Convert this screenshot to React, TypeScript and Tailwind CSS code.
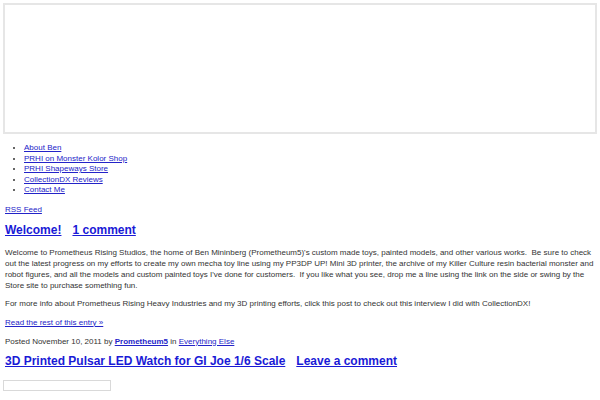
import React from 'react';

const App = () => {
  const pages = ['About Ben', 'PRHI on Monster Kolor Shop', 'PRHI Shapeways Store', 'CollectionDX Reviews', 'Contact Me'];

  return (
    <div className="min-h-screen bg-white text-[#333] text-[8px] leading-[11px]" style={{ fontFamily: '"Liberation Sans", Arial, sans-serif' }}>
      {/* header banner */}
      <div className="mx-[3px] pt-[3px]">
        <div className="h-[131px] border-2 border-[#e6e6e6]"></div>
      </div>

      <ul className="list-disc pl-[24px] mt-[9px] text-[8px] leading-[10.5px]">
        {pages.map((p) => (
          <li key={p}>
            <a href="#" className="text-[#2323c8] underline">{p}</a>
          </li>
        ))}
      </ul>

      <div className="px-[5px]">
        <p className="mt-[8px]">
          <a href="#" className="text-[#2323c8] underline">RSS Feed</a>
        </p>

        <h2 className="mt-[7px] text-[12px] leading-[16px] font-bold text-[#1a1ad6]">
          <a href="#" className="underline">Welcome!</a>
          <a href="#" className="underline ml-[11px]">1 comment</a>
        </h2>

        <p className="mt-[9px]">
          Welcome to Prometheus Rising Studios, the home of Ben Mininberg (Prometheum5)'s custom made toys, painted models, and other various works.&nbsp; Be sure to check out the latest progress on my efforts to create my own mecha toy line using my PP3DP UP! Mini 3D printer, the archive of my Killer Culture resin bacterial monster and robot figures, and all the models and custom painted toys I've done for customers.&nbsp; If you like what you see, drop me a line using the link on the side or swing by the Store site to purchase something fun.
        </p>
        <p className="mt-[7px]">
          For more info about Prometheus Rising Heavy Industries and my 3D printing efforts, click this post to check out this interview I did with CollectionDX!
        </p>
        <p className="mt-[8px]">
          <a href="#" className="text-[#2323c8] underline">Read the rest of this entry »</a>
        </p>
        <p className="mt-[8px]">
          Posted November 10, 2011 by <a href="#" className="text-[#2323c8] underline font-bold">Prometheum5</a> in{' '}
          <a href="#" className="text-[#2323c8] underline">Everything Else</a>
        </p>

        <h2 className="mt-[6px] text-[12px] leading-[16px] font-bold text-[#1a1ad6]">
          <a href="#" className="underline">3D Printed Pulsar LED Watch for GI Joe 1/6 Scale</a>
          <a href="#" className="underline ml-[11px]">Leave a comment</a>
        </h2>

        <div className="mt-[11px] ml-[-2px] w-[108px] h-[11px] border border-[#d9d9d9]"></div>
      </div>
    </div>
  );
};

export default App;
